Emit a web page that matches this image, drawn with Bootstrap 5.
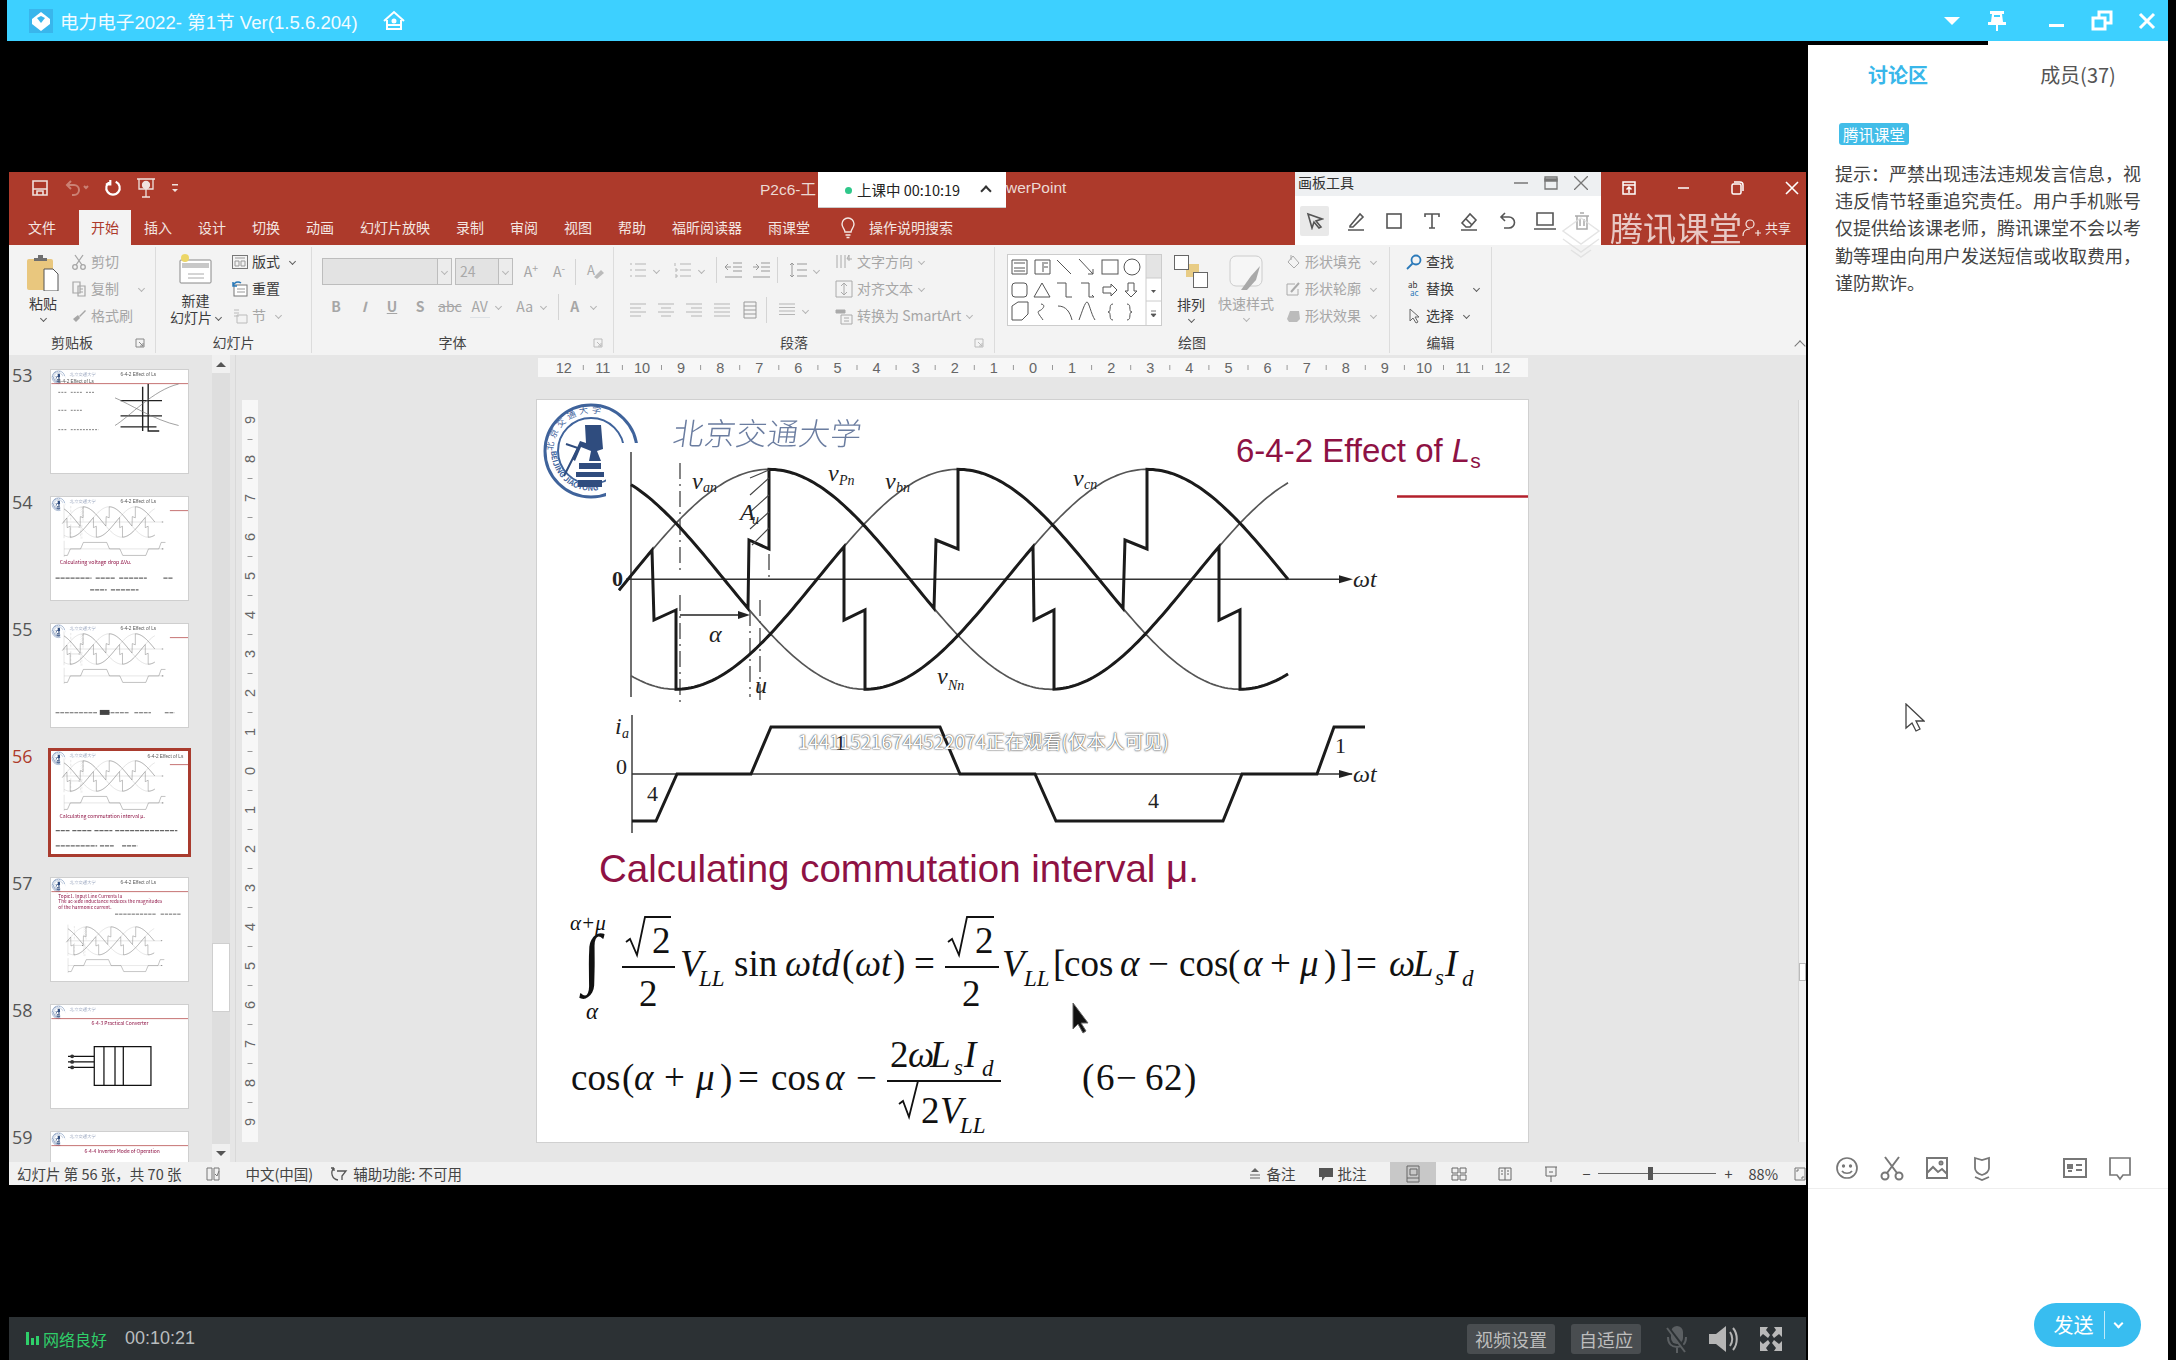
<!DOCTYPE html>
<html lang="zh-CN">
<head>
<meta charset="UTF-8">
<title>电力电子2022- 第1节</title>
<link href="https://cdn.jsdelivr.net/npm/bootstrap@5.3.0/dist/css/bootstrap.min.css" rel="stylesheet">
<style>
  html, body { width: 2176px; height: 1360px; overflow: hidden; background: #000; }
  body, svg text { font-family: "Noto Sans CJK SC", "Liberation Sans", sans-serif; }
  svg { display: block; flex: none; }
  .app { width: 2176px; height: 1360px; }
  .edge { width: 8px; background: #000; }

  /* top client title */
  .client-bar { height: 41px; margin-left: 7px; background: #3dd0ff; color: #f2fbff; font: 18.6px "Liberation Sans", "Noto Sans CJK SC", sans-serif; padding-left: 22px; padding-right: 9px; }
  .client-ico { width: 24px; height: 24px; margin-left: 0; margin-right: 7px; }
  .client-btn { width: 24px; height: 24px; margin-left: 21px; }
  .client-btn.wide { margin-left: 36px; }

  /* powerpoint window */
  .left-col { width: 1806px; padding-left: 9px; background: #000; }
  .ppt { height: 1013px; margin-top: 131px; background: #e6e6e6; position: relative; overflow: hidden; }
  .ppt-top { height: 73px; background: #ad3a2b; color: #f4e6e2; font-size: 14px; }
  .qat { height: 38px; padding-bottom: 6px; }
  .qat-left { width: 751px; padding-left: 21px; gap: 14px; }
  .ppt-title { width: 246px; font: 15.5px "Liberation Sans", "Noto Sans CJK SC", sans-serif; color: #ecd9d4; }
  .win-btns { gap: 24px; margin-left: auto; }
  .tabs { height: 35px; padding-left: 6px; }
  .rtab { padding: 0 13px; height: 35px; line-height: 35px; white-space: nowrap; }
  .rtab-on { background: #f3f3f3; color: #ad3a2b; padding: 0 12px; margin-left: 10px; }
  .share { margin-left: auto; margin-right: 15px; font-size: 13px; gap: 3px; }
  .bulb { margin-left: 18px; margin-right: 14px; }

  .ribbon { height: 110px; background: #f3f3f3; font-size: 14px; color: #3b3b3b; }
  .rb-group { height: 106px; margin-top: 2px; border-right: 1px solid #dcdcdc; }
  .rb-body { height: 85px; padding-top: 1px; }
  .rb-label { height: 21px; line-height: 21px; color: #444; }
  .launch { width: 20px; }
  .g1 { width: 147px; } .g2 { width: 156px; } .g3 { width: 302px; }
  .g4 { width: 381px; } .g5 { width: 395px; } .g6 { width: 102px; }
  .rb-item { height: 27px; white-space: nowrap; }
  .rb-icon { width: 16px; height: 16px; }
  .dim { color: #a6a6a6; }
  .chv { width: 5px; height: 5px; border-right: 1px solid currentColor; border-bottom: 1px solid currentColor; transform: rotate(45deg); margin: 0 6px; flex: none; opacity: .8; }
  .big-col { line-height: 17px; }
  .paste-col { width: 32px; padding-top: 7px; margin-left: 18px; margin-right: 12px; }
  .new-col { width: 53px; padding-top: 5px; margin-left: 13px; margin-right: 10px; }
  .new-txt { margin-top: 8px; }
  .font-col { padding-left: 10px; padding-top: 11px; }
  .font-box { height: 27px; background: #e3e3e3; border: 1px solid #bdbdbd; color: #aaa; }
  .font-name { width: 130px; }
  .font-size { width: 58px; margin-left: 3px; padding-left: 4px; }
  .box-drop { width: 14px; height: 100%; border-left: 1px solid #bdbdbd; margin-left: auto; background: #ececec; }
  .v-sep { width: 1px; height: 26px; background: #d4d4d4; margin: 0 6px; flex: none; }
  .fcell { min-width: 20px; text-align: center; flex: none; }
  .para-left { width: 221px; padding-left: 14px; padding-top: 9px; }
  .para-row2 { margin-top: 14px; }
  .gap8 { gap: 8px; }
  .gallery { width: 155px; height: 72px; margin: 6px 10px 0 12px; }
  .arr-col { width: 38px; padding-top: 7px; }
  .style-col { width: 56px; padding-top: 7px; margin-left: 8px; margin-right: 11px; }
  .collapse-mark { width: 8px; height: 8px; border-left: 1px solid #777; border-top: 1px solid #777; transform: rotate(45deg); margin: 0 2px 5px 0; }

  /* editor */
  .ed-main { height: 807px; }
  .thumb-pane { width: 227px; height: 807px; overflow: hidden; border-right: 1px solid #d9d9d9; position: relative; }
  .thumb-list { padding-top: 15px; gap: 24px; width: 204px; }
  .thumb-row { height: 103px; flex: none; }
  .thumb-no { width: 42px; padding-left: 3px; font: 18px/10px "Open Sans", sans-serif; color: #555; }
  .thumb-no.on { color: #ad3a2b; }
  .thumb { width: 137px; height: 103px; background: #fff; box-shadow: 0 0 0 1px #cfcfcf; filter: blur(.45px); }
  .thumb.on { box-shadow: 0 0 0 3px #a93b2e; }
  .pale { opacity: .65; }
  .pane-scroll { width: 18px; height: 100%; margin-left: auto; margin-right: 5px; background: #dedede; }
  .ps-btn { height: 18px; background: #f0f0f0; }
  .ps-up { width: 0; height: 0; border: 5px solid transparent; border-bottom-color: #555; border-top: 0; }
  .ps-dn { width: 0; height: 0; border: 5px solid transparent; border-top-color: #555; border-bottom: 0; }
  .ps-track { height: 771px; }
  .ps-thumb { height: 69px; margin-top: 570px; background: #fff; border: 1px solid #cfcfcf; }
  .h-ruler { margin: 3px 0 0 302px; background: #f7f7f7; }
  .ed-row { margin-top: 23px; }
  .v-ruler { margin-left: 6px; margin-right: 279px; background: #f7f7f7; }
  .slide { width: 991px; height: 742px; background: #fff; box-shadow: 0 0 0 1px #d0d0d0; position: relative; }
  .watch { position: absolute; left: 261px; top: 329px; width: 376px; font-size: 19px; line-height: 24px; letter-spacing: -.1px; color: #fff; white-space: nowrap; text-shadow: 0 0 2px #444, 0 0 1px #444; }
  .main-scroll { width: 8px; margin-left: auto; background: #f0f0f0; border-left: 1px solid #d6d6d6; }
  .ms-thumb { height: 18px; margin-top: 563px; background: #fff; border: 1px solid #bbb; }

  .statusbar { height: 23px; background: #f1f1f1; font-size: 14.5px; color: #444; padding-left: 8px; white-space: nowrap; }
  .st-view { width: 46px; height: 23px; }
  .st-view.on { background: #c8c8c8; }
  .zoom-track { width: 118px; height: 1px; background: #666; position: relative; }
  .zoom-knob { position: absolute; left: 50px; top: -6px; width: 5px; height: 13px; background: #555; }

  /* overlays on the ppt window */
  .live-pop { position: absolute; left: 809px; top: 0; width: 188px; height: 36px; background: #fff; border-bottom: 1px solid #ccc; color: #222; font: 14.5px "Noto Sans CJK SC", sans-serif; padding-left: 39px; white-space: nowrap; }
  .live-dot { width: 7px; height: 7px; border-radius: 50%; background: #2fc78a; position: absolute; left: 27px; top: 15px; }
  .live-caret { width: 8px; height: 8px; border-left: 2px solid #333; border-top: 2px solid #333; transform: rotate(45deg); position: absolute; left: 164px; top: 15px; }
  .board { position: absolute; left: 1286px; top: 0; width: 306px; height: 73px; background: #fff; color: #333; }
  .board-head { height: 24px; background: #eef0f2; font-size: 14px; padding: 0 13px 3px 3px; }
  .board-tools { height: 49px; padding-left: 5px; }
  .board-cell { width: 38.5px; height: 30px; }
  .board-cell.on { width: 30px; margin-right: 8px; background: #e9e9e9; border-radius: 2px; }
  .brand-mark { position: absolute; left: 1601px; top: 38px; height: 35px; width: 150px; overflow: hidden; color: #fff; opacity: .72; font-size: 33px; line-height: 35px; white-space: nowrap; }
  .brand-logo { position: absolute; left: 1552px; top: 42px; }

  /* bottom play bar */
  .play-bar { height: 43px; margin-top: 132px; background: #2c3134; color: #bbb; padding-left: 17px; padding-right: 23px; }
  .net { color: #2fcf6a; font-size: 16px; gap: 4px; }
  .clock { font: 18px "Liberation Sans", sans-serif; margin-left: 18px; color: #b8bcbe; }
  .play-btn { height: 30px; padding: 0 8px; background: #494d50; color: #bdbdbd; border-radius: 3px; font-size: 18px; line-height: 30px; }
  .speaker { margin-left: 18px; }
  .fullscr { margin-left: 20px; }

  /* right panel */
  .side { width: 362px; background: #fff; border-left: 2px solid #000; color: #444; position: relative; }
  .side-strip { width: 180px; height: 4px; background: #000; }
  .side-tabs { height: 60px; }
  .side-tab { width: 180px; font-size: 20px; text-align: center; color: #555; }
  .side-tab.on { color: #39b7ea; font-weight: 700; padding-right: 0; }
  .sys-tag { display: inline-block; margin: 18px 0 0 31px; padding: 0 4px; height: 22px; line-height: 22px; background: #42bde8; color: #fff; font-size: 15.5px; border-radius: 3px; width: fit-content; white-space: nowrap; }
  .sys-note { margin: 15px 0 0 27px; font-size: 18px; line-height: 27.2px; white-space: nowrap; color: #444; }
  .chat-tools { height: 41px; padding-left: 26px; padding-right: 35px; gap: 19px; border-bottom: 1px solid #eee; color: #777; margin-top: auto; }
  .chat-ico { width: 26px; height: 26px; }
  .chat-input { height: 171px; padding: 0 27px 13px 0; }
  .send-btn { width: 107px; height: 44px; border-radius: 22px; background: #38bdf0; color: #fff; font-size: 20px; }
  .send-sep { width: 1px; height: 28px; background: #bfe9fa; margin: 0 10px; }
  .send-chv { width: 7px; height: 7px; border-right: 2px solid #fff; border-bottom: 2px solid #fff; transform: rotate(45deg); margin-top: -3px; }
  .ptr { position: absolute; left: 97px; top: 662px; }

  /* slide text */
  .tt { font-family: "Liberation Sans", sans-serif; fill: #8e1244; }
  .m { font-family: "Liberation Serif", serif; font-size: 37px; fill: #111; }
  .mi { font-family: "Liberation Serif", serif; font-style: italic; font-size: 37px; fill: #111; }
  .sb { font-family: "Liberation Serif", serif; font-style: italic; font-size: 23px; fill: #111; }
  .lim { font-family: "Liberation Serif", serif; font-style: italic; font-size: 21px; fill: #111; }
  .intg { font-family: "Liberation Serif", serif; font-size: 67px; fill: #111; }
  .g { font-family: "Liberation Serif", serif; font-size: 22px; fill: #222; }
  .gi { font-family: "Liberation Serif", serif; font-style: italic; font-size: 24px; fill: #222; }
  .gs { font-family: "Liberation Serif", serif; font-style: italic; font-size: 14px; fill: #222; }
  .tn { font-family: "Liberation Sans", sans-serif; font-size: 34px; fill: #555; }
  .rl { font-family: "Liberation Sans", sans-serif; font-size: 14.5px; fill: #666; }
</style>
</head>
<body>
<div class="app d-flex">
  <div class="d-flex flex-column flex-grow-1">

    <div class="client-bar d-flex align-items-center">
      <svg class="client-ico" viewBox="0 0 24 24"><rect width="24" height="24" fill="#39b6ec"/><path d="M12 3 21 10v5l-9 7-9-7v-5z" fill="#fff"/><path d="M8 9l4-2 4 2-4 5z" fill="#39b6ec"/></svg>
      <span>电力电子2022- 第1节 Ver(1.5.6.204)</span>
      <svg class="ms-4" width="24" height="24" viewBox="0 0 24 24" fill="none" stroke="#fff" stroke-width="2"><path d="M2 12 12 3l10 9M5 11v9h14v-9M5 16h14"/><circle cx="12" cy="12" r="1.5" fill="#fff"/></svg>
      <div class="ms-auto d-flex align-items-center">
        <svg class="client-btn" viewBox="0 0 24 24"><path d="M4 8h16l-8 8z" fill="#fff"/></svg>
        <svg class="client-btn" viewBox="0 0 24 24" fill="#fff"><path d="M5 2h14v3h-2l1 8h3v3h-8v6h-2v-6H3v-3h3l1-8H5z"/><path d="M9 6h6v2H9z" fill="#3dd0ff"/></svg>
        <svg class="client-btn wide" viewBox="0 0 24 24" fill="#fff"><rect x="4" y="15" width="15" height="3"/></svg>
        <svg class="client-btn" viewBox="0 0 24 24" fill="none" stroke="#fff" stroke-width="3"><rect x="3" y="9" width="12" height="11"/><path d="M9 8V3h12v11h-5"/></svg>
        <svg class="client-btn" viewBox="0 0 24 24" stroke="#fff" stroke-width="3"><path d="M5 5l14 14M19 5 5 19"/></svg>
      </div>
    </div>

    <div class="d-flex flex-grow-1">
      <div class="left-col d-flex flex-column">
        <div class="ppt d-flex flex-column">

          <div class="ppt-top">
            <div class="qat d-flex align-items-center">
              <div class="qat-left d-flex align-items-center">
                <svg width="20" height="20" viewBox="0 0 20 20" fill="none" stroke="#f0e2de" stroke-width="1.6"><path d="M3 3h14v14H3z"/><path d="M3 11h14M7 17v-4h6v4" /></svg>
                <svg width="26" height="20" viewBox="0 0 26 20" fill="none" stroke="#cb8174" stroke-width="2"><path d="M7 3 3 7l4 4M3 7h7a5 5 0 0 1 0 10H8M20 8l2 2 2-2" /></svg>
                <svg width="18" height="20" viewBox="0 0 20 20" fill="none" stroke="#fff" stroke-width="2.4"><path d="M13 3a7.5 7.5 0 1 1-6 0M7 1v5H2"/></svg>
                <svg width="20" height="22" viewBox="0 0 20 22" fill="none" stroke="#f0e2de" stroke-width="1.3"><path d="M1 2h18M3 2v10h14V2M10 12v8M6 20h8"/><circle cx="10" cy="8" r="3.5" fill="#f0e2de"/></svg>
                <svg width="10" height="12" viewBox="0 0 10 12" fill="#f0e2de"><path d="M2 2h6v1.5H2zM2 7h6L5 10z"/></svg>
              </div>
              <div class="ppt-title">P2c6-工</div>
              <div class="ppt-title">werPoint</div>
              <div class="win-btns d-flex align-items-center">
                <svg width="30" height="18" viewBox="0 0 30 18" fill="none" stroke="#fff" stroke-width="1.5"><path d="M9 3h12v12H9zM9 6h12M15 14V8M12.500 10.500 15 8l2.500 2.500"/></svg>
                <svg width="30" height="18" viewBox="0 0 30 18" stroke="#fff" stroke-width="1.5"><path d="M10 9h11"/></svg>
                <svg width="30" height="18" viewBox="0 0 30 18" fill="none" stroke="#fff" stroke-width="1.5"><rect x="10" y="5" width="9" height="10" rx="1.500"/><path d="M12 3h6a3 3 0 0 1 3 3v6"/></svg>
                <svg width="30" height="18" viewBox="0 0 30 18" stroke="#fff" stroke-width="1.6"><path d="M10 3l12 12M22 3 10 15"/></svg>
              </div>
            </div>
            <div class="tabs d-flex align-items-center">
              <span class="rtab">文件</span><span class="rtab rtab-on">开始</span><span class="rtab">插入</span><span class="rtab">设计</span><span class="rtab">切换</span><span class="rtab">动画</span><span class="rtab">幻灯片放映</span><span class="rtab">录制</span><span class="rtab">审阅</span><span class="rtab">视图</span><span class="rtab">帮助</span><span class="rtab">福昕阅读器</span><span class="rtab">雨课堂</span>
              <svg class="bulb" width="14" height="22" viewBox="0 0 14 22" fill="none" stroke="#f4e6e2" stroke-width="1.4"><path d="M4 15c0-3-3-4-3-8a6 6 0 0 1 12 0c0 4-3 5-3 8zM4.500 18h5M5.500 20.500h3"/></svg>
              <span>操作说明搜索</span>
              <div class="share d-flex align-items-center">
                <svg width="20" height="20" viewBox="0 0 20 20" fill="none" stroke="#f4e6e2" stroke-width="1.2"><circle cx="8" cy="6" r="4"/><path d="M1 18c0-5 3-7 7-7M13 15h6M16 12v6"/></svg>
                <span>共享</span>
              </div>
            </div>
          </div>

          <div class="ribbon d-flex">
            <!-- clipboard -->
            <div class="rb-group g1 d-flex flex-column">
              <div class="rb-body d-flex">
                <div class="paste-col big-col d-flex flex-column align-items-center">
                  <svg width="32" height="36" viewBox="0 0 32 36"><rect x="0" y="4" width="26" height="31" rx="2" fill="#e9c77e"/><path d="M7 6V3h4V0h5v3h4v3z" fill="#6f6f6f"/><path d="M17 14h9l5 5v17H17z" fill="#fff" stroke="#555"/></svg>
                  <span class="mt-1">粘贴</span>
                  <span class="chv mt-1"></span>
                </div>
                <div class="dim">
                  <div class="rb-item d-flex align-items-center gap-1"><svg class="rb-icon" viewBox="0 0 16 16" fill="none" stroke="#a6a6a6" stroke-width="1.3"><circle cx="4" cy="13" r="2.3"/><circle cx="12" cy="13" r="2.300"/><path d="M5 11 12 1M11 11 4 1"/></svg>剪切</div>
                  <div class="rb-item d-flex align-items-center gap-1"><svg class="rb-icon" viewBox="0 0 16 16" fill="none" stroke="#a6a6a6" stroke-width="1.200"><path d="M2 1h7v11H2zM7 5h7v10H7z" fill="#f3f3f3"/><path d="M9 8h3M9 11h3"/></svg>复制<span class="chv ms-3"></span></div>
                  <div class="rb-item d-flex align-items-center gap-1"><svg class="rb-icon" viewBox="0 0 16 16" fill="#a6a6a6"><path d="M8 8 14 2l1 1-6 6zM2 11l5-4 2 3-4 4z"/></svg>格式刷</div>
                </div>
              </div>
              <div class="rb-label d-flex"><span class="flex-grow-1 text-center">剪贴板</span><span class="launch"><svg width="10" height="21" viewBox="0 0 10 21" fill="none" stroke="#888"><path d="M1 7h8v8H1zM4 10l4 4M8 11v3H5"/></svg></span></div>
            </div>

            <!-- slides -->
            <div class="rb-group g2 d-flex flex-column">
              <div class="rb-body d-flex">
                <div class="new-col big-col d-flex flex-column align-items-center">
                  <svg width="33" height="31" viewBox="0 0 33 31"><rect x="1" y="7" width="31" height="23" rx="1" fill="#fff" stroke="#888"/><path d="M3 10h27v5H3z" fill="#c8c8c8"/><path d="M9 21h16M9 25h16" stroke="#aaa"/><circle cx="6" cy="5" r="4" fill="#ecd667"/></svg>
                  <span class="new-txt">新建</span>
                  <span class="d-flex align-items-center text-nowrap">幻灯片<span class="chv ms-1 me-0"></span></span>
                </div>
                <div>
                  <div class="rb-item d-flex align-items-center gap-1"><svg class="rb-icon" viewBox="0 0 16 16" fill="none" stroke="#777"><rect x=".5" y="1.500" width="15" height="13"/><path d="M3 4h10M3 7h4v5H3zM9 7h4v5H9z" stroke="#999"/></svg>版式<span class="chv"></span></div>
                  <div class="rb-item d-flex align-items-center gap-1"><svg class="rb-icon" viewBox="0 0 16 16" fill="none"><rect x="2" y="4" width="13" height="11" fill="#fff" stroke="#777"/><path d="M5 8h8M5 11h8" stroke="#999"/><path d="M1 5a5 5 0 0 1 8-3M1 1v4h4" stroke="#2a79b9" stroke-width="1.500"/></svg>重置</div>
                  <div class="rb-item d-flex align-items-center gap-1 dim"><svg class="rb-icon" viewBox="0 0 16 16" fill="none" stroke="#bbb"><path d="M2 2h5M2 5h5M2 8h5M5 7h10v8H5z"/></svg>节<span class="chv"></span></div>
                </div>
              </div>
              <div class="rb-label text-center">幻灯片</div>
            </div>

            <!-- font -->
            <div class="rb-group g3 d-flex flex-column">
              <div class="rb-body font-col">
                <div class="d-flex align-items-center">
                  <div class="font-box font-name d-flex"><span class="box-drop d-flex align-items-center justify-content-center"><span class="chv m-0"></span></span></div>
                  <div class="font-box font-size d-flex align-items-center"><span>24</span><span class="box-drop d-flex align-items-center justify-content-center"><span class="chv m-0"></span></span></div>
                  <span class="fcell dim ms-2">A<sup>+</sup></span>
                  <span class="fcell dim ms-2">A<sup>-</sup></span>
                  <span class="v-sep"></span>
                  <svg class="ms-1" width="20" height="18" viewBox="0 0 20 18"><text x="1" y="12" font-size="13" fill="#aaa">A</text><path d="M8 14l7-7 3 3-7 6z" fill="#bbb"/></svg>
                </div>
                <div class="d-flex align-items-center dim rb-item mt-2">
                  <div class="d-flex gap-2 ps-1">
                    <b class="fcell">B</b><i class="fcell fw-bold">I</i><u class="fcell fw-bold">U</u><b class="fcell">S</b>
                    <s class="fcell">abc</s><span class="fcell border-bottom">AV</span>
                  </div>
                  <span class="chv"></span>
                  <span class="fcell ms-2">Aa</span><span class="chv"></span>
                  <span class="v-sep"></span>
                  <span class="fcell fw-semibold">A</span><span class="chv"></span>
                </div>
              </div>
              <div class="rb-label d-flex"><span class="flex-grow-1 text-center">字体</span><span class="launch"><svg width="10" height="21" viewBox="0 0 10 21" fill="none" stroke="#bbb"><path d="M1 7h8v8H1zM4 10l4 4M8 11v3H5"/></svg></span></div>
            </div>

            <!-- paragraph -->
            <div class="rb-group g4 d-flex flex-column">
              <div class="rb-body d-flex">
                <div class="para-left dim">
                  <div class="d-flex align-items-center">
                    <svg width="20" height="18" viewBox="0 0 20 18" stroke="#b5b5b5" fill="none"><path d="M7 3h11M7 9h11M7 15h11M2 3h2M2 9h2M2 15h2"/></svg><span class="chv"></span>
                    <svg class="ms-2" width="20" height="18" viewBox="0 0 20 18" stroke="#b5b5b5" fill="none"><path d="M7 3h11M7 9h11M7 15h11M2 2v3M2 8h2v2H2M2 14h2v2H2"/></svg><span class="chv"></span>
                    <span class="v-sep"></span>
                    <svg width="20" height="18" viewBox="0 0 20 18" stroke="#999" fill="none"><path d="M10 2h9M10 6h9M10 10h9M2 16h17M2 6h6M5 3 2 6l3 3"/></svg>
                    <svg class="ms-2" width="20" height="18" viewBox="0 0 20 18" stroke="#999" fill="none"><path d="M10 2h9M10 6h9M10 10h9M2 16h17M2 6h6M5 3l3 3-3 3"/></svg>
                    <span class="v-sep"></span>
                    <svg class="ms-1" width="20" height="18" viewBox="0 0 20 18" stroke="#999" fill="none"><path d="M9 3h10M9 9h10M9 15h10M4 2v14M2 4l2-2 2 2M2 14l2 2 2-2"/></svg><span class="chv"></span>
                  </div>
                  <div class="d-flex align-items-center para-row2">
                    <div class="d-flex gap8">
                      <svg width="20" height="18" viewBox="0 0 20 18" stroke="#b5b5b5" fill="none"><path d="M2 3h16M2 7h11M2 11h16M2 15h11"/></svg>
                      <svg width="20" height="18" viewBox="0 0 20 18" stroke="#b5b5b5" fill="none"><path d="M2 3h16M5 7h10M2 11h16M5 15h10"/></svg>
                      <svg width="20" height="18" viewBox="0 0 20 18" stroke="#b5b5b5" fill="none"><path d="M2 3h16M7 7h11M2 11h16M7 15h11"/></svg>
                      <svg width="20" height="18" viewBox="0 0 20 18" stroke="#b5b5b5" fill="none"><path d="M2 3h16M2 7h16M2 11h16M2 15h16"/></svg>
                      <svg width="20" height="18" viewBox="0 0 20 18" stroke="#999" fill="none"><path d="M4 1h12v16H4zM4 5h12M4 9h12M4 13h12"/></svg>
                    </div>
                    <span class="v-sep"></span>
                    <svg class="ms-1" width="20" height="18" viewBox="0 0 20 18" stroke="#b5b5b5" fill="none"><path d="M2 3h16M2 6.500h16M2 10h16M2 13.500h16"/></svg><span class="chv"></span>
                  </div>
                </div>
                <div class="dim">
                  <div class="rb-item d-flex align-items-center"><svg width="18" height="18" viewBox="0 0 18 18" fill="none" stroke="#aaa"><path d="M2 2v13M6 2v13M10 2v13M14 8V2l-2 4h5"/></svg><span class="ms-1">文字方向</span><span class="chv"></span></div>
                  <div class="rb-item d-flex align-items-center"><svg width="18" height="18" viewBox="0 0 18 18" fill="none" stroke="#aaa"><path d="M1 1h16v16H1zM9 4v10M6 6l3-3 3 3M6 12l3 3 3-3"/></svg><span class="ms-1">对齐文本</span><span class="chv"></span></div>
                  <div class="rb-item d-flex align-items-center"><svg width="18" height="18" viewBox="0 0 18 18" fill="none" stroke="#aaa"><path d="M1 3h9v3H1z" fill="#aaa"/><path d="M6 8h11v9H6zM9 11h5M9 14h5"/></svg><span class="ms-1">转换为 SmartArt</span><span class="chv"></span></div>
                </div>
              </div>
              <div class="rb-label d-flex"><span class="flex-grow-1 text-center">段落</span><span class="launch"><svg width="10" height="21" viewBox="0 0 10 21" fill="none" stroke="#bbb"><path d="M1 7h8v8H1zM4 10l4 4M8 11v3H5"/></svg></span></div>
            </div>

            <!-- drawing -->
            <div class="rb-group g5 d-flex flex-column">
              <div class="rb-body d-flex">
                <svg class="gallery" viewBox="0 0 155 72" fill="none" stroke="#555">
                  <rect x=".5" y=".5" width="154" height="71" fill="#fff" stroke="#ccc"/>
                  <rect x="139" y="1" width="15" height="23" fill="#e4e4e4" stroke="none"/>
                  <path d="M139 1v70M139 24h16M139 47h16" stroke="#ccc"/>
                  <path d="M144 36h5l-2.500 3z" fill="#555" stroke="none"/><path d="M144 57h5M144 60h5l-2.500 3z" fill="#555" stroke-width=".8"/>
                  <path d="M5 6h15v14H5zM7 9h11M7 14h11M7 17h11M28 6h15v14H28zM36 8v10M37 9h4M37 13h4M50 6l14 14M72 5l14 15M81 20h5v-5"/>
                  <rect x="95" y="6" width="16" height="14"/><circle cx="125" cy="13" r="8"/>
                  <rect x="5" y="29" width="15" height="14" rx="3"/><path d="M35 29l8 14H27zM50 29h9v14h6M74 29h8v14h5l-2-2M96 33h8v-3l6 6-6 6v-3h-8zM121 29h6v8h3l-6 6-6-6h3z"/>
                  <path d="M5 66V52l6-4h10v12l-6 6zM34 50c6 1 1 6-2 7s3 7 4 9M51 52c8 0 12 6 14 14M72 66c3-8 6-18 8-18s4 12 8 18M106 50c-5 0-1 8-5 8 4 0 0 8 5 8M120 50c5 0 1 8 5 8-4 0-0 8-5 8"/>
                </svg>
                <div class="arr-col big-col d-flex flex-column align-items-center">
                  <svg width="34" height="33" viewBox="0 0 34 33"><path d="M12 9h13v13H12z" fill="#e8cc85"/><rect x=".5" y=".5" width="14" height="14" fill="#fff" stroke="#666"/><rect x="19.500" y="17.500" width="14" height="15" fill="#fff" stroke="#666"/></svg>
                  <span class="mt-2">排列</span>
                  <span class="chv mt-1"></span>
                </div>
                <div class="style-col big-col dim d-flex flex-column align-items-center">
                  <svg width="34" height="36" viewBox="0 0 34 36" fill="none"><rect x="1" y="1" width="32" height="30" rx="6" stroke="#ccc" fill="#f6f6f6"/><path d="M12 35l10-14 9-10-4 14-9 10z" fill="#a9a9a9"/></svg>
                  <span class="mt-1 text-nowrap">快速样式</span>
                  <span class="chv mt-1"></span>
                </div>
                <div class="dim">
                  <div class="rb-item d-flex align-items-center gap-1"><svg class="rb-icon" viewBox="0 0 16 16" fill="none" stroke="#aaa"><path d="M8 2 14 9l-5 5-6-6zM6 1v5"/></svg>形状填充<span class="chv"></span></div>
                  <div class="rb-item d-flex align-items-center gap-1"><svg class="rb-icon" viewBox="0 0 16 16" fill="none" stroke="#aaa"><path d="M2 3h8M2 3v11h11V8"/><path d="M6 11l8-9" stroke-width="2"/></svg>形状轮廓<span class="chv"></span></div>
                  <div class="rb-item d-flex align-items-center gap-1"><svg class="rb-icon" viewBox="0 0 16 16" fill="#bbb"><path d="M2 11 5 3h9l1 8-3 3H4z"/></svg>形状效果<span class="chv"></span></div>
                </div>
              </div>
              <div class="rb-label text-center">绘图</div>
            </div>

            <!-- editing -->
            <div class="rb-group g6 d-flex flex-column">
              <div class="rb-body ps-3">
                <div class="rb-item d-flex align-items-center gap-1"><svg class="rb-icon" viewBox="0 0 16 16" fill="none" stroke="#2a79b9" stroke-width="1.800"><circle cx="10" cy="6" r="4.500"/><path d="M6.500 9.500 1 15"/></svg>查找</div>
                <div class="rb-item d-flex align-items-center gap-1"><svg class="rb-icon" viewBox="0 0 16 16"><text x="2" y="7" font-size="8" fill="#333">ab</text><text x="4" y="15" font-size="8" fill="#2a79b9">ac</text></svg>替换<span class="chv ms-3"></span></div>
                <div class="rb-item d-flex align-items-center gap-1"><svg class="rb-icon" viewBox="0 0 16 16" fill="none" stroke="#666"><path d="M4 1v12l3-3 3 5 2-1-3-5h4z"/></svg>选择<span class="chv"></span></div>
              </div>
              <div class="rb-label text-center">编辑</div>
            </div>
            <div class="flex-grow-1 d-flex justify-content-end align-items-end"><span class="collapse-mark"></span></div>
          </div>

          <div class="ed-main d-flex">
            <div class="thumb-pane d-flex">
              <div class="thumb-list d-flex flex-column">
                <div class="thumb-row d-flex">
                  <div class="thumb-no">53</div>
                  <svg class="thumb" viewBox="537 400 991 742"><use href="#thdr"/><path d="M540 497h988" stroke="#a33" stroke-width="5"/><text x="1040" y="445" class="tn">6-4-2 Effect of Ls</text><text x="590" y="490" class="tn" fill="#8e1244">6-4-2 Effect of Ls</text><path d="M590 560h60m30 0h80m30 0h60M590 690h60m30 0h80M590 830h60m30 0h200" stroke="#666" stroke-width="6" stroke-dasharray="14 8"/><path d="M1040 620h300M1040 730h300M1040 810h260M1200 520v320M1240 500v340h80" stroke="#222" stroke-width="10" fill="none"/><path d="M1000 600c100 40 280 160 460 200M1000 800c100-60 280-260 460-300" stroke="#777" stroke-width="5" fill="none"/></svg>
                </div>
                <div class="thumb-row d-flex">
                  <div class="thumb-no">54</div>
                  <svg class="thumb" viewBox="537 400 991 742"><use href="#thdr"/><path d="M1397 497h131" stroke="#a33" stroke-width="5"/><text x="1040" y="445" class="tn">6-4-2 Effect of Ls</text><use class="pale" href="#wave"/><text x="600" y="880" font-family="Liberation Sans" font-size="38" fill="#8e1244">Calculating voltage drop ΔVu.</text><path d="M570 985h260m30 0h140m30 0h200m120 0h70M820 1070h120m30 0h200" stroke="#666" stroke-width="8" stroke-dasharray="30 6"/></svg>
                </div>
                <div class="thumb-row d-flex">
                  <div class="thumb-no">55</div>
                  <svg class="thumb" viewBox="537 400 991 742"><use href="#thdr"/><path d="M1397 497h131" stroke="#a33" stroke-width="5"/><text x="1040" y="445" class="tn">6-4-2 Effect of Ls</text><use class="pale" href="#wave"/><path d="M570 1040h300m30 0h200m40 0h120m100 0h70" stroke="#666" stroke-width="8" stroke-dasharray="28 6"/><path d="M890 1020h70v36h-70z" fill="#444"/></svg>
                </div>
                <div class="thumb-row d-flex">
                  <div class="thumb-no on">56</div>
                  <svg class="thumb on" viewBox="537 400 991 742"><use href="#thdr"/><path d="M1397 497h131" stroke="#a33" stroke-width="5"/><text x="1236" y="450" class="tn" fill="#8e1244">6-4-2 Effect of Ls</text><use class="pale" href="#wave"/><text x="599" y="882" font-family="Liberation Sans" font-size="37" fill="#8e1244">Calculating commutation interval μ.</text><path d="M571 975h100m20 0h140m20 0h130m20 0h450M571 1085h300m20 0h100m60 0h110" stroke="#666" stroke-width="9" stroke-dasharray="30 6"/></svg>
                </div>
                <div class="thumb-row d-flex">
                  <div class="thumb-no">57</div>
                  <svg class="thumb" viewBox="537 400 991 742"><use href="#thdr"/><path d="M540 497h988" stroke="#a33" stroke-width="5"/><text x="1040" y="445" class="tn">6-4-2 Effect of Ls</text><text x="590" y="540" font-family="Liberation Sans" font-size="34" fill="#8e1244">Topic1. Input Line Currents Ia</text><text x="590" y="580" font-family="Liberation Sans" font-size="34" fill="#8e1244">The ac-side inductance reduces the magnitudes</text><text x="590" y="620" font-family="Liberation Sans" font-size="34" fill="#8e1244">of the harmonic current.</text><path d="M1000 660h300m30 0h150" stroke="#666" stroke-width="7" stroke-dasharray="24 6"/><g transform="translate(60 320) scale(.95 .92)"><use class="pale" href="#wave"/></g></svg>
                </div>
                <div class="thumb-row d-flex">
                  <div class="thumb-no">58</div>
                  <svg class="thumb" viewBox="537 400 991 742"><use href="#thdr"/><path d="M540 497h988" stroke="#a33" stroke-width="5"/><text x="830" y="540" font-family="Liberation Sans" font-size="36" fill="#8e1244">6-4-3 Practical Converter</text><path d="M660 770h190M660 810h190M660 850h190M850 700h410v280H850zM920 700v280M1000 700v280M1060 700v280M1260 780v90" stroke="#111" stroke-width="9" fill="none"/><circle cx="690" cy="770" r="14" fill="#333"/><circle cx="690" cy="810" r="14" fill="#333"/><circle cx="690" cy="850" r="14" fill="#333"/></svg>
                </div>
                <div class="thumb-row d-flex">
                  <div class="thumb-no">59</div>
                  <svg class="thumb" viewBox="537 400 991 742"><use href="#thdr"/><path d="M540 497h988" stroke="#a33" stroke-width="5"/><text x="780" y="550" font-family="Liberation Sans" font-size="36" fill="#8e1244">6-4-4 Inverter Mode of Operation</text></svg>
                </div>
              </div>
              <div class="pane-scroll d-flex flex-column">
                <div class="ps-btn d-flex align-items-center justify-content-center"><span class="ps-up"></span></div>
                <div class="ps-track"><div class="ps-thumb"></div></div>
                <div class="ps-btn d-flex align-items-center justify-content-center"><span class="ps-dn"></span></div>
              </div>
            </div>

            <div class="flex-grow-1">
              <svg class="h-ruler" id="hRuler" width="990" height="19" viewBox="538 0 990 19"></svg>
              <div class="d-flex ed-row">
                <svg class="v-ruler" id="vRuler" width="16" height="742" viewBox="0 400 16 742"></svg>
                <div class="slide">
                  <svg width="991" height="742" viewBox="537 400 991 742">
                    <defs>
                      <g id="seal">
                        <circle cx="591" cy="451" r="46" fill="none" stroke="#3f639b" stroke-width="3"/>
                        <circle cx="591" cy="451" r="33" fill="none" stroke="#3f639b" stroke-width="2"/>
                        <path id="sealTop" d="M553 451a38 38 0 0 1 76 0" fill="none"/>
                        <path id="sealBot" d="M551 451a40 40 0 0 0 48 39" fill="none"/>
                        <text font-size="9" fill="#3f639b" letter-spacing="3"><textPath href="#sealTop">北京交通大学</textPath></text>
                        <text font-family="Liberation Sans" font-size="7.500" font-weight="700" fill="#3f639b"><textPath href="#sealBot">BEIJING JIAOTONG</textPath></text>
                        <path d="M585 425h16l2 24-6 2 4 10h-12l2-10-10-4-6 14-3-2 8-18 6 2z" fill="#2f4c7e"/>
                        <path d="M579 463h22v6h-22zM576 472h28v5h-28zM578 480h24v7h-24z" fill="#2f4c7e"/>
                        <path d="M566 444l12 4-14 28" stroke="#2f4c7e" stroke-width="2" fill="none"/>
                        <rect x="606" y="443" width="36" height="62" fill="#fff"/>
                      </g>
                      <g id="thdr">
                        <use href="#seal"/>
                        <text x="672" y="445" font-size="31" letter-spacing=".5" font-weight="300" fill="#5b6f96" transform="translate(62 0) skewX(-8)" opacity=".9">北京交通大学</text>
                      </g>
                      <g id="wave" fill="none">
                        <path d="M631 452v245M626 579.300h720M632 715v118M632 774h720" stroke="#333" stroke-width="1.400"/>
                        <path d="M680 463v109M680 595v110M750 610v87M769 470v110M760 600v100" stroke="#444" stroke-width="1.300" stroke-dasharray="16 5 2 5"/>
                        <path id="sines" stroke="#555" stroke-width="1.700"/>
                        <path id="bold" stroke="#1b1b1b" stroke-width="3" stroke-linejoin="miter"/>
                        <path d="M750 478l19-8M750 495l19-17M750 512l19-17M750 529l19-17M752 545l17-17" stroke="#444" stroke-width="1.100"/>
                        <path d="M632 821h24l21-47h74l20-47h169l20 47h75l21 47h167l19-47h75l17-47h31" stroke="#1b1b1b" stroke-width="3"/>
                        <path d="M680 615h60" stroke="#222" stroke-width="1.500"/>
                        <path d="M1353 579.300l-14-4v8zM1353 774l-14-4v8zM750 615l-12-4v8z" fill="#222"/>
                      </g>
                    </defs>
                    <use href="#thdr"/>
                    <text x="1236" y="462" class="tt" font-size="33">6-4-2 Effect of <tspan font-style="italic">L</tspan><tspan font-size="21" dy="6">s</tspan></text>
                    <path d="M1397 496.500h131" stroke="#b3202c" stroke-width="2.500"/>
                    <use href="#wave"/>
                    <text x="612" y="586" class="g" font-weight="700">0</text>
                    <text x="1353" y="587" class="gi">ωt</text>
                    <text x="1353" y="782" class="gi">ωt</text>
                    <text x="692" y="489" class="gi">v</text><text x="703" y="492" class="gs">an</text>
                    <text x="828" y="481" class="gi">v</text><text x="839" y="485" class="gs">Pn</text>
                    <text x="885" y="489" class="gi">v</text><text x="896" y="492" class="gs">bn</text>
                    <text x="1073" y="486" class="gi">v</text><text x="1084" y="489" class="gs">cn</text>
                    <text x="937" y="684" class="gi">v</text><text x="948" y="690" class="gs">Nn</text>
                    <text x="740" y="520" class="gi">A</text><text x="752" y="524" class="gs">u</text>
                    <text x="709" y="642" class="gi">α</text>
                    <text x="755" y="693" class="gi">u</text>
                    <text x="615" y="734" class="gi">i</text><text x="622" y="738" class="gs">a</text>
                    <text x="616" y="774" class="g">0</text>
                    <text x="647" y="801" class="g">4</text>
                    <text x="1148" y="808" class="g">4</text>
                    <text x="1335" y="753" class="g">1</text>
                    <text x="835" y="750" class="g">1</text>

                    <text x="599" y="882" class="tt" font-size="38.500">Calculating commutation interval μ.</text>

                    <!-- integral equation -->
                    <text x="570" y="930" class="lim">α+μ</text>
                    <text x="583" y="981" class="intg">∫</text>
                    <text x="586" y="1019" class="sb">α</text>
                    <path d="M626 942l4-3 7 16 8-38h26" fill="none" stroke="#111" stroke-width="1.800"/>
                    <text x="652" y="953" class="m">2</text>
                    <path d="M622 967h53" stroke="#111" stroke-width="1.800"/>
                    <text x="639" y="1006" class="m">2</text>
                    <text x="680" y="976" class="mi">V</text><text x="699" y="986" class="sb">LL</text>
                    <text x="734" y="976" class="m">sin</text>
                    <text x="785" y="976" class="mi">ωtd</text>
                    <text x="842" y="976" class="m">(</text><text x="855" y="976" class="mi">ωt</text><text x="893" y="976" class="m">)</text>
                    <text x="914" y="976" class="m">=</text>
                    <path d="M948 942l4-3 7 16 8-38h27" fill="none" stroke="#111" stroke-width="1.800"/>
                    <text x="975" y="953" class="m">2</text>
                    <path d="M945 967h54" stroke="#111" stroke-width="1.800"/>
                    <text x="962" y="1006" class="m">2</text>
                    <text x="1002" y="976" class="mi">V</text><text x="1024" y="986" class="sb">LL</text>
                    <text x="1053" y="976" class="m">[</text>
                    <text x="1064" y="976" class="m">cos</text>
                    <text x="1120" y="976" class="mi">α</text>
                    <text x="1148" y="976" class="m">−</text>
                    <text x="1179" y="976" class="m">cos</text>
                    <text x="1228" y="976" class="m">(</text><text x="1243" y="976" class="mi">α</text>
                    <text x="1270" y="976" class="m">+</text>
                    <text x="1300" y="976" class="mi">μ</text>
                    <text x="1324" y="976" class="m">)</text><text x="1340" y="976" class="m">]</text>
                    <text x="1356" y="976" class="m">=</text>
                    <text x="1389" y="976" class="mi">ω</text><text x="1413" y="976" class="mi">L</text><text x="1435" y="985" class="sb">s</text>
                    <text x="1445" y="976" class="mi">I</text><text x="1462" y="986" class="sb">d</text>

                    <!-- second equation -->
                    <text x="571" y="1090" class="m">cos</text>
                    <text x="622" y="1090" class="m">(</text><text x="634" y="1090" class="mi">α</text>
                    <text x="664" y="1090" class="m">+</text>
                    <text x="696" y="1090" class="mi">μ</text><text x="720" y="1090" class="m">)</text>
                    <text x="738" y="1090" class="m">=</text>
                    <text x="771" y="1090" class="m">cos</text>
                    <text x="825" y="1090" class="mi">α</text>
                    <text x="856" y="1090" class="m">−</text>
                    <text x="890" y="1067" class="m">2</text><text x="908" y="1067" class="mi">ω</text><text x="930" y="1067" class="mi">L</text><text x="954" y="1075" class="sb">s</text><text x="964" y="1067" class="mi">I</text><text x="982" y="1076" class="sb">d</text>
                    <path d="M887 1081h114" stroke="#111" stroke-width="1.800"/>
                    <path d="M899 1104l4-3 6 16 9-36h22" fill="none" stroke="#111" stroke-width="1.800"/>
                    <text x="921" y="1123" class="m">2</text><text x="940" y="1123" class="mi">V</text><text x="960" y="1133" class="sb">LL</text>
                    <text x="1082" y="1090" class="m">(</text><text x="1096" y="1090" class="m">6</text><text x="1116" y="1090" class="m">−</text><text x="1145" y="1090" class="m">6</text><text x="1164" y="1090" class="m">2</text><text x="1184" y="1090" class="m">)</text>

                    <path d="M1073 1003v26l5-5 5 9 3-2-5-8h7z" fill="#111" stroke="#666"/>
                  </svg>
                  <div class="watch">144115216744522074正在观看(仅本人可见)</div>
                </div>
                <div class="main-scroll">
                  <div class="ms-thumb"></div>
                </div>
              </div>
            </div>
          </div>

          <div class="statusbar d-flex align-items-center">
            <span>幻灯片 第 56 张，共 70 张</span>
            <svg class="ms-4" width="16" height="16" viewBox="0 0 16 16" fill="none" stroke="#777"><path d="M2 2h5v12H2zM9 2h5v12H9zM10 8l2 2 2-5"/></svg>
            <span class="ms-4">中文(中国)</span>
            <svg class="ms-3" width="20" height="18" viewBox="0 0 20 18" fill="none" stroke="#555" stroke-width="1.300"><path d="M5 3a7 7 0 0 0 4 12M5 3H2M5 3v3M8 6h9l-4 5v4"/></svg>
            <span class="ms-1">辅助功能: 不可用</span>
            <div class="ms-auto d-flex align-items-center">
              <svg width="14" height="14" viewBox="0 0 14 14" stroke="#666" fill="none"><path d="M2 8h10M2 11h10"/><path d="M7 1l4 4H3z" fill="#666" stroke="none"/></svg>
              <span class="ms-1">备注</span>
              <svg class="ms-4" width="14" height="14" viewBox="0 0 14 14" fill="#555"><path d="M0 1h14v9H6l-3 4v-4H0z"/></svg>
              <span class="ms-1">批注</span>
              <span class="st-view on d-flex align-items-center justify-content-center ms-4"><svg width="14" height="18" viewBox="0 0 14 18" fill="none" stroke="#666"><path d="M1 1h12v16H1zM1 13h12M4 4h7v6H4z"/></svg></span>
              <span class="st-view d-flex align-items-center justify-content-center"><svg width="16" height="16" viewBox="0 0 16 16" fill="none" stroke="#666"><path d="M1 2h6v5H1zM9 2h6v5H9zM1 9h6v5H1zM9 9h6v5H9z"/></svg></span>
              <span class="st-view d-flex align-items-center justify-content-center"><svg width="16" height="16" viewBox="0 0 16 16" fill="none" stroke="#666"><path d="M2 2h12v12H2zM8 2v12M4 5h2M4 8h2M10 5h2M10 8h2"/></svg></span>
              <span class="st-view d-flex align-items-center justify-content-center"><svg width="14" height="18" viewBox="0 0 14 18" fill="none" stroke="#666"><path d="M1 2h12M2 2v9h10V2M7 11v6M5 7h4"/></svg></span>
              <span class="ms-2">−</span>
              <span class="zoom-track ms-2"><span class="zoom-knob"></span></span>
              <span class="ms-2">+</span>
              <span class="ms-3">88%</span>
              <svg class="ms-3" width="12" height="14" viewBox="0 0 12 14" fill="none" stroke="#777"><path d="M1 1h10v12H1zM3 3h2M3 3v2M9 11H7M9 11V9"/></svg>
            </div>
          </div>

          <!-- overlays -->
          <div class="live-pop d-flex align-items-center">
            <span class="live-dot"></span>
            <span>上课中 00:10:19</span>
            <span class="live-caret"></span>
          </div>
          <div class="brand-mark">腾讯课堂</div>
          <div class="board">
            <div class="board-head d-flex align-items-center">
              <span>画板工具</span>
              <div class="ms-auto d-flex align-items-center gap-3">
                <svg width="14" height="14" viewBox="0 0 14 14" stroke="#777" stroke-width="1.500"><path d="M0 7h14"/></svg>
                <svg width="14" height="14" viewBox="0 0 14 14" fill="none" stroke="#777" stroke-width="1.300"><path d="M1 1h12v12H1z"/><path d="M1 3h12v2H1z" fill="#777"/></svg>
                <svg width="14" height="14" viewBox="0 0 14 14" stroke="#777" stroke-width="1.300"><path d="M0 0l14 14M14 0 0 14"/></svg>
              </div>
            </div>
            <div class="board-tools d-flex align-items-center">
              <span class="board-cell on d-flex align-items-center justify-content-center"><svg width="18" height="18" viewBox="0 0 18 18" fill="none" stroke="#555" stroke-width="1.600"><path d="M2 2l14 5-6 2 5 6-2 1-5-6-2 6z"/></svg></span>
              <span class="board-cell d-flex align-items-center justify-content-center"><svg width="20" height="20" viewBox="0 0 20 20" fill="none" stroke="#555" stroke-width="1.600"><path d="M4 15 14 3l3 3-10 10H4zM2 19h16"/></svg></span>
              <span class="board-cell d-flex align-items-center justify-content-center"><svg width="18" height="18" viewBox="0 0 18 18" fill="none" stroke="#555" stroke-width="1.600"><rect x="2" y="2" width="14" height="14"/></svg></span>
              <span class="board-cell d-flex align-items-center justify-content-center"><svg width="18" height="18" viewBox="0 0 18 18" fill="none" stroke="#555" stroke-width="1.600"><path d="M2 5V2h14v3M9 2v14M6 16h6"/></svg></span>
              <span class="board-cell d-flex align-items-center justify-content-center"><svg width="20" height="20" viewBox="0 0 20 20" fill="none" stroke="#555" stroke-width="1.600"><path d="M3 12 11 3l6 6-6 7H7zM2 19h16M7 8l6 6"/></svg></span>
              <span class="board-cell d-flex align-items-center justify-content-center"><svg width="18" height="18" viewBox="0 0 18 18" fill="none" stroke="#555" stroke-width="1.600"><path d="M7 1 3 5l4 4M3 5h8a5 5 0 0 1 0 11H6"/></svg></span>
              <span class="board-cell d-flex align-items-center justify-content-center"><svg width="22" height="18" viewBox="0 0 22 18" fill="none" stroke="#555" stroke-width="1.600"><path d="M3 1h16v12H3zM0 17h22"/></svg></span>
              <span class="board-cell d-flex align-items-center justify-content-center"><svg width="16" height="18" viewBox="0 0 16 18" fill="none" stroke="#aaa" stroke-width="1.500"><path d="M3 4h10v13H3zM1 4h14M6 1h4M6 7v7M10 7v7"/></svg></span>
            </div>
          </div>
          <svg class="brand-logo" width="40" height="48" viewBox="0 0 40 48" fill="none" stroke="#dedede" stroke-width="1.500" opacity=".8"><path d="M20 4 38 17 20 30 2 17zM2 25l18 13 18-13M10 36l10 7 10-7"/></svg>
        </div>

        <div class="play-bar d-flex align-items-center">
          <span class="net d-flex align-items-center">
            <svg width="13" height="13" viewBox="0 0 13 13" fill="#2fcf6a"><path d="M0 0h3v13H0zM5 6h3v7H5zM10 4h3v9h-3z"/></svg>
            网络良好
          </span>
          <span class="clock">00:10:21</span>
          <div class="ms-auto d-flex align-items-center">
            <span class="play-btn">视频设置</span>
            <span class="play-btn ms-3">自适应</span>
            <svg class="ms-4" width="24" height="30" viewBox="0 0 24 30" fill="#5b5f62"><rect x="6" y="2" width="12" height="18" rx="6"/><path d="M3 13c0 7 4 10 9 10s9-3 9-10M12 23v6" fill="none" stroke="#5b5f62" stroke-width="2"/><path d="M2 2l20 26" stroke="#2c3134" stroke-width="3"/><path d="M2 4l18 24" stroke="#5b5f62" stroke-width="2"/></svg>
            <svg class="speaker" width="32" height="30" viewBox="0 0 32 30"><path d="M2 10h7l10-8v26l-10-8H2z" fill="#b5b5b5"/><path d="M23 8c3 4 3 10 0 14M26 4c5 6 5 16 0 22" fill="none" stroke="#b5b5b5" stroke-width="2"/></svg>
            <svg class="fullscr" width="24" height="26" viewBox="0 0 24 26" fill="#b9b9b9"><path d="M1 1h8l-2 3 4 5-2 3-5-4-3 3zM23 1h-8l2 3-4 5 2 3 5-4 3 3zM1 25h8l-2-3 4-5-2-3-5 4-3-3zM23 25h-8l2-3-4-5 2-3 5 4 3-3z"/></svg>
          </div>
        </div>
      </div>

      <!-- chat side -->
      <aside class="side d-flex flex-column">
        <div class="side-strip"></div>
        <div class="side-tabs d-flex align-items-center">
          <div class="side-tab on">讨论区</div>
          <div class="side-tab">成员(37)</div>
        </div>
        <div class="sys-tag">腾讯课堂</div>
        <div class="sys-note">提示：严禁出现违法违规发言信息，视<br>违反情节轻重追究责任。用户手机账号<br>仅提供给该课老师，腾讯课堂不会以考<br>勤等理由向用户发送短信或收取费用，<br>谨防欺诈。</div>
        <svg class="ptr" width="20" height="29" viewBox="0 0 20 29"><path d="M1 1v24l6-5 4 8 4-2-4-8h8z" fill="#fff" stroke="#444" stroke-width="1.300"/></svg>
        <div class="chat-tools d-flex align-items-center">
          <svg class="chat-ico" viewBox="0 0 26 26" fill="none" stroke="#777" stroke-width="1.700"><circle cx="13" cy="13" r="10"/><circle cx="9.500" cy="11" r=".8"/><circle cx="16.500" cy="11" r=".8"/><path d="M8 16c2 3 8 3 10 0"/></svg>
          <svg class="chat-ico" viewBox="0 0 26 26" fill="none" stroke="#777" stroke-width="2"><circle cx="6" cy="21" r="3.500"/><circle cx="20" cy="21" r="3.500"/><path d="M8 18 20 2M18 18 6 2"/></svg>
          <svg class="chat-ico" viewBox="0 0 26 26" fill="none" stroke="#777" stroke-width="2"><rect x="3" y="3" width="20" height="20"/><path d="M3 18l6-6 5 5 4-3 5 5"/><circle cx="17" cy="8" r="1.500"/></svg>
          <svg class="chat-ico" viewBox="0 0 26 26" fill="none" stroke="#777" stroke-width="1.800"><path d="M6 3l7 2 7-2v10c0 4-4 6-7 7-3-1-7-3-7-7zM6 22l7 3 7-3"/></svg>
          <svg class="chat-ico ms-auto" viewBox="0 0 26 26" fill="none" stroke="#777" stroke-width="2"><rect x="2" y="4" width="22" height="18"/><path d="M6 10h4v3H6zM6 16h4M14 10h6M14 15h6" fill="#777"/></svg>
          <svg class="chat-ico" viewBox="0 0 26 26" fill="none" stroke="#777" stroke-width="1.700"><path d="M3 3h20v17h-7l-3 4-3-4H3z"/></svg>
        </div>
        <div class="chat-input d-flex justify-content-end align-items-end">
          <div class="send-btn d-flex align-items-center justify-content-center">
            <span>发送</span>
            <span class="send-sep"></span>
            <span class="send-chv"></span>
          </div>
        </div>
      </aside>
    </div>
  </div>
  <div class="edge"></div>
</div>

<script src="https://cdn.jsdelivr.net/npm/bootstrap@5.3.0/dist/js/bootstrap.bundle.min.js"></script>
<script>
  // the slide's sine curves, taken from peak position and period
  const PERIOD = 564, MID = 579.3, AMP = 110;
  function vy(peak, x) {
    return (MID - AMP * Math.cos(2 * Math.PI * (x - peak) / PERIOD)).toFixed(1);
  }
  function seg(peak, a, b, start) {
    let d = "";
    for (let x = a; x <= b; x += 3) d += (d === "" && start ? "M" : "L") + x + " " + vy(peak, x);
    return d;
  }
  document.getElementById("sines").setAttribute("d",
    seg(769, 619, 1289, true) + seg(958, 631, 1289, true) + seg(1147, 631, 1289, true));

  const up = seg(583, 631, 749, true) + "L749 540L769 549L769 470" + seg(769, 769, 936) +
    "L936 540L958 549L958 470" + seg(958, 958, 1125) + "L1125 540L1147 549L1147 470" + seg(1147, 1147, 1289);
  const down = seg(769, 619, 654, true) + "L654 620L676 610L676 689" + seg(958, 676, 844) +
    "L844 620L865 610L865 689" + seg(1147, 865, 1034) + "L1034 620L1054 610L1054 689" + seg(769, 1054, 1219) +
    "L1219 620L1240 610L1240 689" + seg(958, 1240, 1289);
  document.getElementById("bold").setAttribute("d", up + down);

  // rulers
  const NS = "http://www.w3.org/2000/svg";
  function add(svg, name, attrs, txt) {
    const el = document.createElementNS(NS, name);
    for (const k in attrs) el.setAttribute(k, attrs[k]);
    if (txt !== undefined) el.textContent = txt;
    svg.appendChild(el);
  }
  const h = document.getElementById("hRuler"), v = document.getElementById("vRuler");
  for (let k = -12; k <= 12; k++) {
    const x = 1033 + k * 39.1;
    add(h, "text", { x: x, y: 14.5, "text-anchor": "middle", class: "rl" }, Math.abs(k));
    if (k < 12) add(h, "path", { d: "M" + (x + 19.5) + " 7v5", stroke: "#999" });
  }
  for (let k = -9; k <= 9; k++) {
    const y = 771 + k * 39;
    add(v, "text", { x: 13, y: y, "text-anchor": "middle", class: "rl", transform: "rotate(-90 13 " + y + ")" }, Math.abs(k));
    if (k < 9) add(v, "path", { d: "M5.500 " + (y + 19.5) + "h5", stroke: "#999" });
  }
</script>
</body>
</html>
